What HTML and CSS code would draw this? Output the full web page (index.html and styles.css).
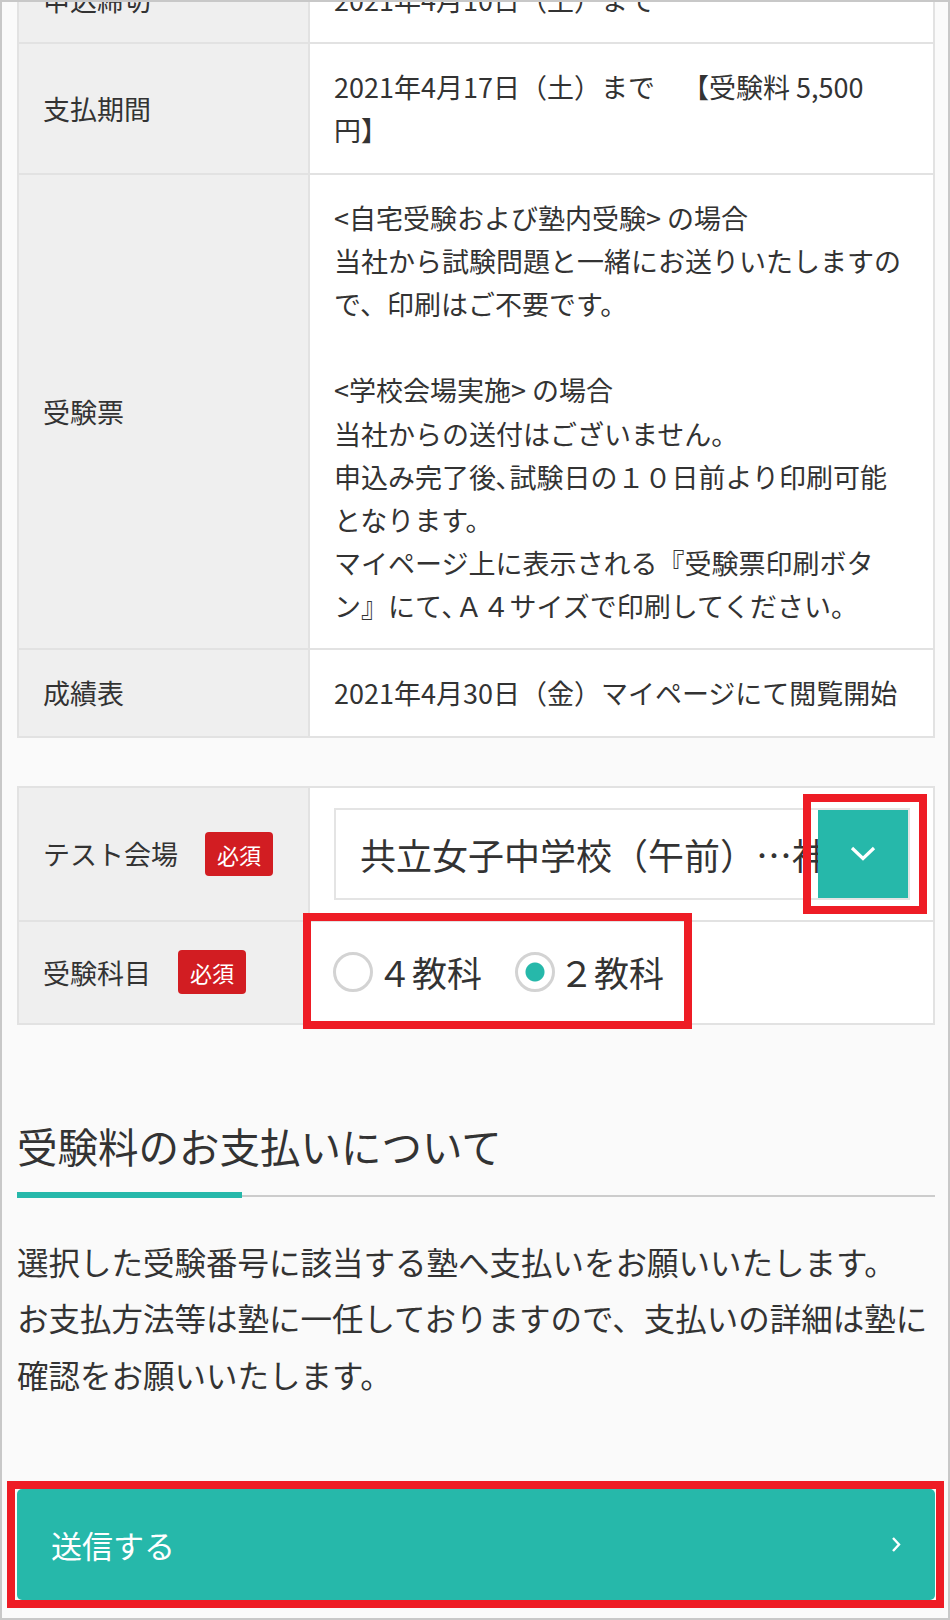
FILE: index.html
```html
<!DOCTYPE html>
<html lang="ja">
<head>
  <meta charset="UTF-8">
  <meta name="viewport" content="width=device-width, initial-scale=1.0">
  <title>受験申込</title>
  <link rel="stylesheet" href="styles.css">
</head>
<body>

  <div class="page">

    <table class="info-table schedule">
      <tbody>
        <tr>
          <th>申込締切</th>
          <td>2021年4月10日（土）まで</td>
        </tr>
        <tr>
          <th>支払期間</th>
          <td>2021年4月17日（土）まで　【受験料 5,500円】</td>
        </tr>
        <tr>
          <th>受験票</th>
          <td>
            &lt;自宅受験および塾内受験&gt; の場合<br>
            当社から試験問題と一緒にお送りいたしますので、印刷はご不要です。<br>
            <br>
            &lt;学校会場実施&gt; の場合<br>
            当社からの送付はございません。<br>
            申込み完了後､試験日の１０日前より印刷可能となります。<br>
            マイページ上に表示される『受験票印刷ボタン』にて､Ａ４サイズで印刷してください。
          </td>
        </tr>
        <tr>
          <th>成績表</th>
          <td>2021年4月30日（金）マイページにて閲覧開始</td>
        </tr>
      </tbody>
    </table>

    <form action="#" method="post" id="form">
      <table class="info-table entry">
        <tbody>
          <tr>
            <th><div class="label">テスト会場 <span class="required">必須</span></div></th>
            <td class="field">
              <div class="select-wrap">
                <select name="venue" id="venue">
                  <option>共立女子中学校（午前）…神田</option>
                </select>
                <span class="select-button">
                  <svg width="26" height="15" viewBox="0 0 26 15"><polyline points="2,2 13,12.5 24,2" fill="none" stroke="#fff" stroke-width="3.2"/></svg>
                </span>
                <span class="mark select-mark"></span>
              </div>
            </td>
          </tr>
          <tr>
            <th><div class="label">受験科目 <span class="required">必須</span></div></th>
            <td class="field">
              <div class="radios">
                <label class="radio"><input type="radio" name="subject" value="4">４教科</label>
                <label class="radio"><input type="radio" name="subject" value="2" checked>２教科</label>
                <span class="mark radio-mark"></span>
              </div>
            </td>
          </tr>
        </tbody>
      </table>

      <h2 class="section-title">受験料のお支払いについて</h2>
      <p class="section-text">選択した受験番号に該当する塾へ支払いをお願いいたします。<br>お支払方法等は塾に一任しておりますので、支払いの詳細は塾に確認をお願いいたします。</p>

      <button type="submit" class="submit-button">
        <span>送信する</span>
        <svg width="10" height="17" viewBox="0 0 10 17"><polyline points="2,2 8,8.5 2,15" fill="none" stroke="#fff" stroke-width="2.4"/></svg>
        <span class="mark submit-mark"></span>
      </button>
    </form>

  </div>

</body>
</html>
```

FILE: styles.css
```css
* {
  box-sizing: border-box;
}
body {
  margin: 0;
  font-family: "Noto Sans CJK JP", "Noto Sans", sans-serif;
  color: #333;
  text-spacing-trim: space-all;
}
.page {
  width: 950px;
  height: 1620px;
  overflow: hidden;
  border: 2px solid #c8c8c8;
  background: #fafafa;
  padding: 0 13px 0 15px;
}
.info-table {
  width: 100%;
  table-layout: fixed;
  border-collapse: separate;
  border-spacing: 0;
  border-top: 2px solid #e2e2e2;
  border-left: 2px solid #e2e2e2;
  font-size: 27px;
  line-height: 1.6;
}
.info-table th, .info-table td {
  border-right: 2px solid #e2e2e2;
  border-bottom: 2px solid #e2e2e2;
  padding: 21px 24px;
  text-align: left;
  font-weight: normal;
}
.info-table th {
  width: 291px;
  background: #efefef;
  vertical-align: middle;
}
.info-table td {
  background: #fff;
}
.schedule {
  margin-top: -47px;
}
.entry {
  margin-top: 48px;
}
.entry td.field {
  padding: 20px 23px 20px 24px;
}
.entry tr + tr td.field {
  padding: 21px 24px;
}
.label {
  display: flex;
  align-items: center;
  gap: 27px;
  white-space: nowrap;
}
.required {
  display: inline-block;
  width: 68px;
  height: 44px;
  line-height: 44px;
  border-radius: 4px;
  background: #d21d22;
  color: #fff;
  font-size: 22px;
  text-align: center;
}
.select-wrap {
  position: relative;
  height: 92px;
}
.select-wrap select {
  appearance: none;
  width: 100%;
  height: 92px;
  border: 2px solid #e4e4e4;
  border-radius: 0;
  background: #fff;
  padding: 0 4px 0 24px;
  font-family: inherit;
  font-size: 36px;
  color: #333;
}
.select-button {
  position: absolute;
  top: 2px;
  right: 2px;
  bottom: 2px;
  width: 90px;
  background: #26b8aa;
  display: flex;
  align-items: center;
  justify-content: center;
}
.radios {
  position: relative;
  display: flex;
  align-items: center;
  gap: 34px;
  height: 59px;
  font-size: 35px;
}
.radio {
  display: flex;
  align-items: center;
  gap: 4px;
  margin-left: -1px;
}
.radio input {
  appearance: none;
  width: 40px;
  height: 40px;
  margin: 0;
  border: 3px solid #d3d3d3;
  border-radius: 50%;
  background: #fff;
}
.radio input:checked {
  background: radial-gradient(circle, #26b8aa 0 9px, #fff 10px);
}
.section-title {
  position: relative;
  margin: 93px 0 36px;
  padding-bottom: 21px;
  border-bottom: 2px solid #ccc;
  font-size: 40.5px;
  line-height: 56px;
  font-weight: normal;
}
.section-title::after {
  content: "";
  position: absolute;
  left: 0;
  bottom: -3px;
  width: 225px;
  height: 6px;
  background: #26b8aa;
}
.section-text {
  margin: 0;
  font-size: 31.5px;
  line-height: 1.8;
}
.submit-button {
  position: relative;
  display: flex;
  align-items: center;
  justify-content: space-between;
  width: 100%;
  height: 111px;
  margin-top: 86px;
  padding: 0 34px 0 34px;
  border: none;
  border-radius: 5px;
  background: #26b8aa;
  color: #fff;
  font-family: inherit;
  font-size: 31px;
}
.mark {
  position: absolute;
  border: 8px solid #ee1c25;
  pointer-events: none;
}
.select-mark {
  top: -14px;
  right: -17px;
  width: 124px;
  height: 120px;
}
.radio-mark {
  top: -30px;
  left: -31px;
  width: 389px;
  height: 116px;
}
.submit-mark {
  top: -8px;
  left: -10px;
  width: 937px;
  height: 127px;
}
```
